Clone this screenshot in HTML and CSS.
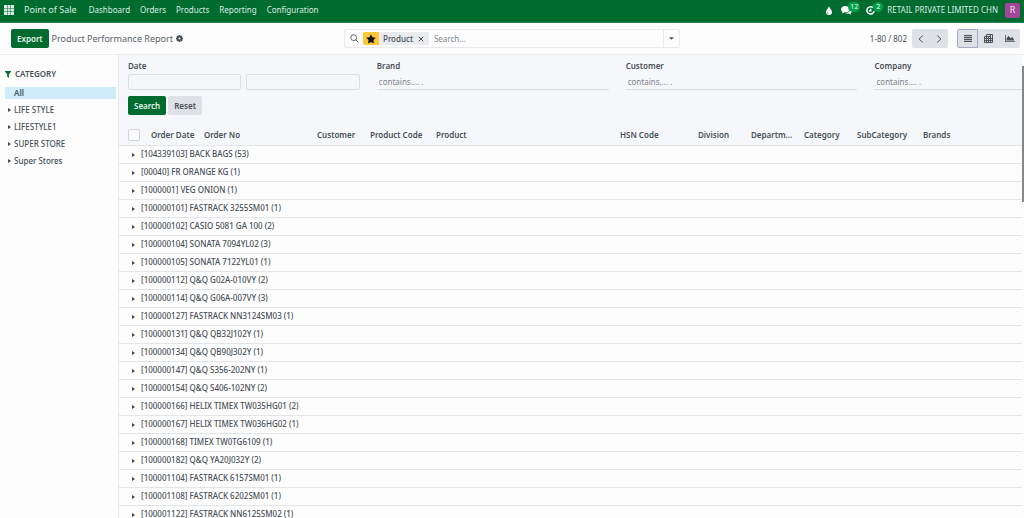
FILE: index.html
```html
<!DOCTYPE html>
<html lang="en">
<head>
<meta charset="UTF-8">
<meta name="viewport" content="width=device-width, initial-scale=1.0">
<link rel="stylesheet" href="styles.css">
<title>Product Performance Report</title>
</head>
<body>
<header class="navbar">
  <button class="apps" aria-label="Apps">
    <svg width="10" height="10" viewBox="0 0 10 10"><path d="M0 0h3v3H0zM3.5 0h3v3h-3zM7 0h3v3H7zM0 3.5h3v3H0zM3.5 3.5h3v3h-3zM7 3.5h3v3H7zM0 7h3v3H0zM3.5 7h3v3h-3zM7 7h3v3H7z"/></svg>
  </button>
  <a class="brand" href="#">Point of Sale</a>
  <nav class="menu">
    <a href="#">Dashboard</a>
    <a href="#">Orders</a>
    <a href="#">Products</a>
    <a href="#">Reporting</a>
    <a href="#">Configuration</a>
  </nav>
  <div class="systray">
    <button class="tray" aria-label="Theme">
      <svg width="6" height="9" viewBox="0 0 6 9"><path d="M3 0C3.5 2.4 6 3.8 6 6a3 3 0 0 1-6 0C0 3.8 2.5 2.4 3 0z"/><path class="hole" d="M1.300 5.500c-.5 1.200.2 2 1.200 2.100v-.7c-.8 0-1.100-.6-1.200-1.400z"/></svg>
    </button>
    <button class="tray tray-chat" aria-label="Messages">
      <svg width="11" height="9" viewBox="0 0 11 9"><path d="M4.300 0C6.700 0 8.600 1.400 8.600 3.200S6.700 6.400 4.300 6.400l-.9-.1C2.700 6.900 1.800 7.300.7 7.400c.5-.4.8-.9.9-1.500C.6 5.300 0 4.300 0 3.200 0 1.400 1.900 0 4.300 0z"/><path d="M9.300 2.500C10.400 3.100 11 4 11 5c0 .9-.6 1.700-1.400 2.200.1.600.4 1 .9 1.500-1-.1-1.800-.5-2.500-1.100-1.500.2-2.800-.1-3.700-.6 3-.1 5.200-1.700 5-4.500z"/></svg>
      <span class="badge">12</span>
    </button>
    <button class="tray tray-clock" aria-label="Activities">
      <svg width="9" height="9" viewBox="0 0 9 9"><path class="line" d="M6.800 1.600A3.600 3.600 0 1 0 8.100 5M4.700 2.700v2.100H3"/></svg>
      <span class="badge">2</span>
    </button>
    <a class="company" href="#">RETAIL PRIVATE LIMITED CHN</a>
    <button class="avatar">R</button>
  </div>
</header>

<div class="control-panel">
  <div class="title">
    <button class="btn btn-primary">Export</button>
    <h1>Product Performance Report</h1>
    <button class="gear" aria-label="Actions">
      <svg width="7" height="7" viewBox="0 0 8 8"><circle cx="4" cy="4" r="2.200"/><path d="M4 0v1.400M4 6.600V8M0 4h1.400M6.600 4H8M1.200 1.200l1 1M5.800 5.800l1 1M6.800 1.200l-1 1M2.200 5.800l-1 1"/></svg>
    </button>
  </div>
  <div class="search">
    <svg class="lens" width="9" height="9" viewBox="0 0 9 9"><circle cx="3.700" cy="3.700" r="2.900"/><path d="M5.900 5.900l2.500 2.500"/></svg>
    <div class="facet">
      <span class="facet-icon"><svg width="10" height="10" viewBox="0 0 10 10"><path d="M5 .3l1.500 3 3.300.5-2.400 2.300.6 3.300L5 7.900 2 9.400l.6-3.300L.2 3.800l3.300-.5z"/></svg></span>
      <span class="facet-label">Product</span>
      <button class="facet-remove" aria-label="Remove"><svg width="6" height="6" viewBox="0 0 6 6"><path d="M.8.8l4.400 4.400M5.200.8L.8 5.200"/></svg></button>
    </div>
    <input class="search-input" type="text" placeholder="Search..." aria-label="Search">
    <button class="search-toggle" aria-label="Toggle search panel"><svg width="5" height="3" viewBox="0 0 6 3"><path d="M0 0h6L3 3z"/></svg></button>
  </div>
  <div class="tools">
    <span class="pager-value">1-80 / 802</span>
    <div class="btn-group pager">
      <button aria-label="Previous"><svg width="6" height="8" viewBox="0 0 6 8"><path class="line" d="M4.700.5L1.200 4l3.500 3.500"/></svg></button>
      <button aria-label="Next"><svg width="6" height="8" viewBox="0 0 6 8"><path class="line" d="M1.300.5L4.800 4 1.300 7.500"/></svg></button>
    </div>
    <div class="btn-group views">
      <button class="active" aria-label="List"><svg width="8" height="7" viewBox="0 0 8 7"><path d="M0 0h8v1.200H0zM0 1.900h8v1.200H0zM0 3.800h8V5H0zM0 5.700h8v1.200H0z"/></svg></button>
      <button aria-label="Pivot"><svg width="9" height="9" viewBox="0 0 9 9"><path class="thin" d="M2.500 2.500V.5h6v8h-8v-6h6M2.500 2.500v6M4.500 2.500v6M6.500.5v8M.5 4.500h8M.5 6.500h8"/></svg></button>
      <button aria-label="Graph"><svg width="10" height="7" viewBox="0 0 10 7"><path d="M0 0h.8v6.200H10V7H0zM1.500 5.600V3.400l2-2.600 2.200 2.400L7.500 2l1.900 3.600z"/></svg></button>
    </div>
  </div>
</div>

<div class="content">
  <aside class="sidebar">
    <h2><svg width="6" height="7" viewBox="0 0 6 7"><path d="M0 0h6v.8L3.900 3.200V7L2.200 5.700V3.200L0 .8z"/></svg>CATEGORY</h2>
    <ul>
      <li class="selected"><a href="#">All</a></li>
      <li><i class="caret"></i><a href="#">LIFE STYLE</a></li>
      <li><i class="caret"></i><a href="#">LIFESTYLE1</a></li>
      <li><i class="caret"></i><a href="#">SUPER STORE</a></li>
      <li><i class="caret"></i><a href="#">Super Stores</a></li>
    </ul>
  </aside>

  <main class="report">
    <form class="filters">
      <div class="fields">
        <div class="field">
          <label for="date-from">Date</label>
          <div class="dates">
            <input id="date-from" type="text">
            <input id="date-to" type="text" aria-label="Date to">
          </div>
        </div>
        <div class="field">
          <label for="brand">Brand</label>
          <input id="brand" class="underlined" type="text" placeholder="contains.... .">
        </div>
        <div class="field">
          <label for="customer">Customer</label>
          <input id="customer" class="underlined" type="text" placeholder="contains.... .">
        </div>
        <div class="field">
          <label for="company">Company</label>
          <input id="company" class="underlined" type="text" placeholder="contains.... .">
        </div>
      </div>
      <div class="actions">
        <button type="button" class="btn btn-primary">Search</button>
        <button type="reset" class="btn btn-secondary">Reset</button>
      </div>
    </form>

    <table class="list">
      <colgroup>
        <col class="w-check"><col class="w-sm"><col class="w-order"><col class="w-sm"><col class="w-md"><col>
        <col class="w-hsn"><col class="w-sm"><col class="w-sm"><col class="w-sm"><col class="w-md"><col class="w-brands">
      </colgroup>
      <thead>
        <tr>
          <th class="check"><input type="checkbox" aria-label="Select all"></th>
          <th>Order Date</th>
          <th>Order No</th>
          <th>Customer</th>
          <th>Product Code</th>
          <th>Product</th>
          <th>HSN Code</th>
          <th>Division</th>
          <th>Departm...</th>
          <th>Category</th>
          <th>SubCategory</th>
          <th>Brands</th>
        </tr>
      </thead>
      <tbody>
        <tr><td colspan="12"><i class="caret"></i>[104339103] BACK BAGS (53)</td></tr>
        <tr><td colspan="12"><i class="caret"></i>[00040] FR ORANGE KG (1)</td></tr>
        <tr><td colspan="12"><i class="caret"></i>[1000001] VEG ONION (1)</td></tr>
        <tr><td colspan="12"><i class="caret"></i>[100000101] FASTRACK 3255SM01 (1)</td></tr>
        <tr><td colspan="12"><i class="caret"></i>[100000102] CASIO 5081 GA 100 (2)</td></tr>
        <tr><td colspan="12"><i class="caret"></i>[100000104] SONATA 7094YL02 (3)</td></tr>
        <tr><td colspan="12"><i class="caret"></i>[100000105] SONATA 7122YL01 (1)</td></tr>
        <tr><td colspan="12"><i class="caret"></i>[100000112] Q&amp;Q G02A-010VY (2)</td></tr>
        <tr><td colspan="12"><i class="caret"></i>[100000114] Q&amp;Q G06A-007VY (3)</td></tr>
        <tr><td colspan="12"><i class="caret"></i>[100000127] FASTRACK NN3124SM03 (1)</td></tr>
        <tr><td colspan="12"><i class="caret"></i>[100000131] Q&amp;Q QB32J102Y (1)</td></tr>
        <tr><td colspan="12"><i class="caret"></i>[100000134] Q&amp;Q QB90J302Y (1)</td></tr>
        <tr><td colspan="12"><i class="caret"></i>[100000147] Q&amp;Q S356-202NY (1)</td></tr>
        <tr><td colspan="12"><i class="caret"></i>[100000154] Q&amp;Q S406-102NY (2)</td></tr>
        <tr><td colspan="12"><i class="caret"></i>[100000166] HELIX TIMEX TW035HG01 (2)</td></tr>
        <tr><td colspan="12"><i class="caret"></i>[100000167] HELIX TIMEX TW036HG02 (1)</td></tr>
        <tr><td colspan="12"><i class="caret"></i>[100000168] TIMEX TW0TG6109 (1)</td></tr>
        <tr><td colspan="12"><i class="caret"></i>[100000182] Q&amp;Q YA20J032Y (2)</td></tr>
        <tr><td colspan="12"><i class="caret"></i>[100001104] FASTRACK 6157SM01 (1)</td></tr>
        <tr><td colspan="12"><i class="caret"></i>[100001108] FASTRACK 6202SM01 (1)</td></tr>
        <tr><td colspan="12"><i class="caret"></i>[100001122] FASTRACK NN6125SM02 (1)</td></tr>
      </tbody>
    </table>
  </main>
  <div class="scrollbar"><div class="thumb"></div></div>
</div>
</body>
</html>
```
FILE: styles.css
```css
* {
  box-sizing: border-box;
}
body {
  margin: 0;
  height: 100vh;
  overflow: hidden;
  display: flex;
  flex-direction: column;
  font-family: "Noto Sans", "Open Sans", sans-serif;
  font-size: 8px;
  line-height: 12px;
  color: #495057;
  background: #fdfdfd;
}
button, input {
  font: inherit;
  color: inherit;
  margin: 0;
}
button {
  border: none;
  background: none;
  padding: 0;
  cursor: pointer;
}
a {
  color: inherit;
  text-decoration: none;
}
svg {
  display: block;
  fill: currentColor;
}
.line, .thin {
  fill: none;
  stroke: currentColor;
}

/* navbar */
.navbar {
  display: flex;
  align-items: center;
  flex: none;
  height: 23px;
  padding: 0 4px;
  padding-bottom: 2px;
  color: #dcebe1;
  background: #006b2f;
  border-bottom: 1px solid #2f8455;
}
.brand {
  margin-left: 10px;
  font-size: 9px;
}
.menu {
  display: flex;
  gap: 10px;
  margin-left: 12px;
}
.systray {
  display: flex;
  align-items: center;
  margin-left: auto;
}
.hole {
  fill: #006b2f;
}
.tray {
  position: relative;
  margin-right: 9px;
  color: #fff;
}
.tray-chat {
  margin-right: 14px;
}
.tray-clock {
  margin-right: 12px;
}
.tray-clock .line {
  stroke-width: 1.5;
}
.badge {
  position: absolute;
  left: 7px;
  top: -4px;
  min-width: 10px;
  padding: 0 2px;
  border-radius: 5px;
  font-size: 7px;
  line-height: 10px;
  text-align: center;
  background: #00a04a;
}
.avatar {
  width: 15px;
  height: 15px;
  margin-left: 7px;
  border-radius: 2px;
  font-size: 9px;
  color: #f3e3f1;
  background: #a2469b;
}

/* control panel */
.control-panel {
  display: grid;
  grid-template-columns: 1fr 336px 1fr;
  align-items: center;
  flex: none;
  height: 32px;
  padding: 0 4px;
  border-bottom: 1px solid #eceef0;
}
.title {
  display: flex;
  align-items: center;
  gap: 3px;
  padding-left: 7px;
}
.title h1 {
  margin: 0;
  font-size: 9px;
  font-weight: 400;
  color: #5c6168;
}
.gear svg {
  fill: none;
  stroke: #495057;
  stroke-width: 2;
}
.btn {
  height: 19px;
  padding: 0 6px;
  border-radius: 2px;
  font-weight: 600;
}
.btn-primary {
  color: #e9f3ed;
  background: #006b2f;
}
.btn-secondary {
  background: #dee2e6;
}
.search {
  display: flex;
  align-items: center;
  height: 19px;
  border: 1px solid #e9eaec;
  border-radius: 2px;
}
.lens {
  margin: 0 4px 0 5px;
  fill: none;
  stroke: #60656b;
}
.facet {
  display: flex;
  align-items: center;
  height: 13px;
  border-radius: 2px;
  overflow: hidden;
  background: #e9ebee;
}
.facet-icon {
  display: flex;
  align-items: center;
  justify-content: center;
  width: 16px;
  height: 13px;
  color: #111;
  background: #fdc736;
}
.facet-label {
  padding: 0 5px 0 4px;
  font-weight: 500;
}
.facet-remove {
  padding-right: 5px;
}
.facet-remove svg {
  stroke: #495057;
  stroke-width: 1;
}
.search-input {
  flex: 1;
  min-width: 0;
  padding: 0 5px;
  border: none;
  background: none;
}
::placeholder {
  color: #7d858d;
  opacity: 1;
}
.search-toggle {
  display: flex;
  align-items: center;
  justify-content: center;
  width: 16px;
  height: 17px;
  border-left: 1px solid #e9eaec;
}
.tools {
  display: flex;
  align-items: center;
  justify-content: flex-end;
}
.btn-group {
  display: flex;
  border-radius: 2px;
  overflow: hidden;
  background: #dee2e6;
}
.btn-group button {
  display: flex;
  align-items: center;
  justify-content: center;
  width: 18px;
  height: 19px;
}
.pager {
  margin: 0 9px 0 5px;
}
.btn-group.views button {
  width: 21px;
}
.views .active {
  border: 1px solid #a9a8c8;
  border-radius: 2px 0 0 2px;
}

/* content */
.content {
  display: flex;
  flex: 1;
  min-height: 0;
}
.sidebar {
  flex: none;
  width: 119px;
  padding: 13px 2px 0 5px;
  border-right: 1px solid #e6e8eb;
}
.sidebar h2 {
  display: flex;
  align-items: center;
  gap: 4px;
  margin: 0 0 7px;
  font-size: 8px;
  font-weight: 600;
}
.sidebar h2 svg {
  fill: #006b2f;
}
.sidebar ul {
  margin: 0;
  padding: 0;
  list-style: none;
}
.sidebar li {
  display: flex;
  align-items: center;
  height: 17px;
  padding-left: 3px;
  font-weight: 500;
}
.sidebar li.selected {
  height: 12px;
  margin-bottom: 2px;
  padding-left: 9px;
  font-weight: 600;
  background: #cfecfa;
}
.caret {
  display: inline-block;
  border-top: 2px solid transparent;
  border-bottom: 2px solid transparent;
  border-left: 3px solid #40464c;
}
.sidebar .caret {
  margin-right: 3px;
}

.report {
  flex: 1;
  min-width: 0;
  overflow: hidden;
}
.filters {
  padding: 5px 0 10px 9px;
  background: #f6f7fa;
}
.fields {
  display: grid;
  grid-template-columns: 11fr 11fr 11fr 7fr;
  gap: 17px;
}
.field label {
  display: block;
  margin-bottom: 2px;
  font-weight: 600;
}
.field input {
  display: block;
  width: 100%;
  height: 16px;
  border: 1px solid #dcdfe3;
  border-radius: 2px;
  background: none;
}
.field .underlined {
  padding: 0 2px;
  border-width: 0 0 1px;
  border-radius: 0;
}
.dates {
  display: flex;
  gap: 5px;
}
.actions {
  display: flex;
  gap: 2px;
  margin-top: 6px;
}

.list {
  width: 100%;
  table-layout: fixed;
  border-collapse: collapse;
}
.w-check { width: 28px; }
.w-sm { width: 53px; }
.w-order { width: 113px; }
.w-md { width: 66px; }
.w-hsn { width: 78px; }
.w-brands { width: 103px; }
.list th {
  height: 20px;
  padding: 0 0 0 4px;
  text-align: left;
  font-weight: 600;
  white-space: nowrap;
  background: #f6f7fa;
}
.list th.check {
  padding-left: 9px;
}
.list input {
  display: block;
  appearance: none;
  width: 12px;
  height: 12px;
  border: 1px solid #cfd3d7;
  border-radius: 2px;
  background: #fbfbfc;
}
.list td {
  height: 18px;
  padding: 0 0 0 13px;
  font-weight: 500;
  border-top: 1px solid #e3e6e9;
}
.list .caret {
  margin-right: 6px;
  vertical-align: middle;
}

.scrollbar {
  flex: none;
  width: 2px;
  padding-top: 11px;
}
.thumb {
  height: 30%;
  background: #85878a;
}
```
